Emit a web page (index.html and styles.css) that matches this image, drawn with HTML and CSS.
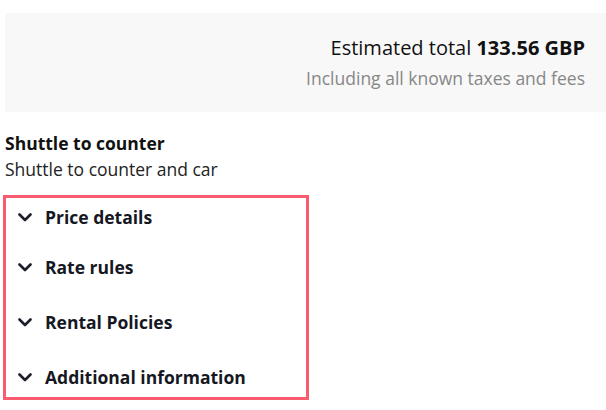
FILE: index.html
```html
<!DOCTYPE html>
<html>
<head>
<meta charset="utf-8">
<link rel="stylesheet" href="styles.css">
</head>
<body>
<div class="summary">
  <div class="total">Estimated total <b>133.56 GBP</b></div>
  <div class="note">Including all known taxes and fees</div>
</div>
<div class="product">
  <div class="product-title">Shuttle to counter</div>
  <div class="product-sub">Shuttle to counter and car</div>
</div>
<div class="accordion">
  <div class="row r1">
    <svg class="chev" width="14" height="9" viewBox="0 0 14 9"><path d="M1.5 1.5 L7 7 L12.5 1.5" fill="none" stroke="#1c1f2a" stroke-width="2.6" stroke-linecap="round" stroke-linejoin="round"/></svg>
    <span>Price details</span>
  </div>
  <div class="row r2">
    <svg class="chev" width="14" height="9" viewBox="0 0 14 9"><path d="M1.5 1.5 L7 7 L12.5 1.5" fill="none" stroke="#1c1f2a" stroke-width="2.6" stroke-linecap="round" stroke-linejoin="round"/></svg>
    <span>Rate rules</span>
  </div>
  <div class="row">
    <svg class="chev" width="14" height="9" viewBox="0 0 14 9"><path d="M1.5 1.5 L7 7 L12.5 1.5" fill="none" stroke="#1c1f2a" stroke-width="2.6" stroke-linecap="round" stroke-linejoin="round"/></svg>
    <span>Rental Policies</span>
  </div>
  <div class="row">
    <svg class="chev" width="14" height="9" viewBox="0 0 14 9"><path d="M1.5 1.5 L7 7 L12.5 1.5" fill="none" stroke="#1c1f2a" stroke-width="2.6" stroke-linecap="round" stroke-linejoin="round"/></svg>
    <span>Additional information</span>
  </div>
</div>
</body>
</html>
```
FILE: styles.css
```css
html, body {
  margin: 0;
  padding: 0;
  background: #ffffff;
}
body {
  font-family: "Open Sans", "Noto Sans", sans-serif;
  color: #1a1a1a;
  width: 606px;
}
.summary {
  margin: 13px 0 0 5px;
  height: 99px;
  box-sizing: border-box;
  background: #f8f8f8;
  padding: 22px 21px 0 0;
  text-align: right;
}
.total {
  font-size: 20px;
  line-height: 26px;
  color: #111;
}
.total b {
  font-weight: 700;
}
.note {
  margin-top: 4px;
  font-size: 17.5px;
  line-height: 26px;
  color: #878787;
}
.product {
  margin: 18px 0 0 5px;
}
.product-title {
  font-size: 17.5px;
  font-weight: 700;
  line-height: 26px;
  color: #111;
}
.product-sub {
  font-size: 17.5px;
  line-height: 26px;
  color: #222;
}
.accordion {
  margin: 13px 0 0 3px;
  width: 306px;
  height: 205px;
  box-sizing: border-box;
  border: 3px solid #fb5b6e;
  padding: 0 0 0 12px;
}
.row {
  display: flex;
  align-items: center;
  gap: 13px;
  height: 24px;
  margin-top: 31px;
  font-size: 17.5px;
  font-weight: 700;
  color: #151822;
}
.row.r1 {
  margin-top: 7px;
}
.row.r2 {
  margin-top: 26px;
}
.chev {
  flex: none;
  display: block;
}
```
